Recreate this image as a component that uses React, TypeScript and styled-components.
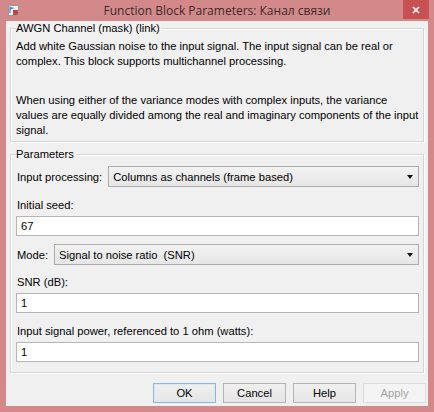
import React from 'react'
import styled, { createGlobalStyle } from 'styled-components'

const GlobalStyle = createGlobalStyle`
  html, body {
    margin: 0;
    padding: 0;
    background: #d3898a;
  }
  body {
    font-family: "Liberation Sans", Arial, sans-serif;
    font-size: 11.2px;
    color: #000;
  }
`

const Window = styled.div`
  width: 434px;
  height: 412px;
  background: #d3898a;
  display: flex;
  flex-direction: column;
`

const TitleBar = styled.div`
  position: relative;
  height: 21px;
  flex: none;
  display: flex;
  align-items: center;
  justify-content: center;
`

const Title = styled.span`
  font-family: "Open Sans", "Liberation Sans", sans-serif;
  font-size: 12px;
  color: #3b2a2a;
`

const AppIcon = styled.svg`
  position: absolute;
  left: 8px;
  top: 5px;
`

const CloseButton = styled.div`
  position: absolute;
  right: 5px;
  top: 0;
  width: 26px;
  height: 19px;
  background: #c75050;
  display: flex;
  align-items: center;
  justify-content: center;
`

const Client = styled.div`
  flex: 1;
  margin: 0 6px 6px 6px;
  padding: 0 2px 0 4px;
  background: #f0f0f0;
  display: flex;
  flex-direction: column;
`

const Group = styled.fieldset<{ $top: number; $bottom: number }>`
  margin: ${p => p.$top}px 2px 0 0;
  padding: 0 4px ${p => p.$bottom}px 5px;
  min-width: 0;
  border: 1px solid #d5d5d5;
  border-radius: 0;
  box-shadow: inset 1px 1px 0 #fff, 1px 1px 0 #fff;
`

const Legend = styled.legend`
  padding: 0 2px 0 0;
  line-height: 15px;
`

const Para = styled.p<{ $gap: number }>`
  margin: ${p => p.$gap}px 0 0 0;
  line-height: 15px;
  white-space: nowrap;
`

const Row = styled.div<{ $top: number }>`
  display: flex;
  align-items: center;
  margin-top: ${p => p.$top}px;
`

const RowLabel = styled.span`
  flex: none;
  margin-right: 6px;
  padding-left: 1px;
`

const Select = styled.div`
  flex: 1;
  height: 21px;
  box-sizing: border-box;
  border: 1px solid #acacac;
  background: linear-gradient(#f2f2f2, #e6e6e6);
  display: flex;
  align-items: center;
  padding: 0 5px 0 4px;
`

const SelectText = styled.span`
  flex: 1;
`

const Arrow = styled.span`
  width: 0;
  height: 0;
  border-left: 3.5px solid transparent;
  border-right: 3.5px solid transparent;
  border-top: 4px solid #111;
`

const FieldLabel = styled.div<{ $top: number }>`
  margin: ${p => p.$top}px 0 3px 1px;
  line-height: 16px;
`

const TextBox = styled.div`
  height: 20px;
  box-sizing: border-box;
  border: 1px solid #b5b5b5;
  background: #fff;
  padding: 0 4px;
  display: flex;
  align-items: center;
`

const ButtonBar = styled.div`
  display: flex;
  justify-content: flex-end;
  gap: 7px;
  margin-top: 10px;
`

const Button = styled.div<{ $default?: boolean; $disabled?: boolean }>`
  width: 63px;
  height: 20px;
  box-sizing: border-box;
  display: flex;
  align-items: center;
  justify-content: center;
  border: 1px solid ${p => (p.$default ? '#8cb6e0' : p.$disabled ? '#dcdcdc' : '#b4b4b4')};
  background: ${p => (p.$disabled ? '#f4f4f4' : 'linear-gradient(#f0f0f0, #e5e5e5)')};
  color: ${p => (p.$disabled ? '#a3a3a3' : '#000')};
  box-shadow: ${p => (p.$default ? 'inset 0 0 0 1px #dbe9f7' : 'none')};
`

export default function App() {
  return (
    <Window>
      <GlobalStyle />
      <TitleBar>
        <AppIcon width="11" height="11" viewBox="0 0 11 11">
          <rect x="0.5" y="0.5" width="10" height="10" fill="#f4f4f4" stroke="#9a9a9a" />
          <path d="M2 1.5 V8" stroke="#2a5fa8" strokeWidth="1" />
          <path d="M2.5 2 L6.5 3 L2.5 4.5 Z" fill="#3b78c8" />
          <rect x="5.5" y="5.5" width="4" height="4" fill="#d23a3a" stroke="#8a1f1f" strokeWidth="0.6" />
        </AppIcon>
        <Title>Function Block Parameters: Канал связи</Title>
        <CloseButton>
          <svg width="8" height="8" viewBox="0 0 8 8">
            <path d="M1 1 L7 7 M7 1 L1 7" stroke="#fff" strokeWidth="1.6" />
          </svg>
        </CloseButton>
      </TitleBar>
      <Client>
        <Group $top={0} $bottom={3}>
          <Legend>AWGN Channel (mask) (link)</Legend>
          <Para $gap={3}>
            Add white Gaussian noise to the input signal. The input signal can be real or
            <br />
            complex. This block supports multichannel processing.
          </Para>
          <Para $gap={24}>
            When using either of the variance modes with complex inputs, the variance
            <br />
            values are equally divided among the real and imaginary components of the input
            <br />
            signal.
          </Para>
        </Group>
        <Group $top={5} $bottom={10}>
          <Legend>Parameters</Legend>
          <Row $top={4}>
            <RowLabel>Input processing:</RowLabel>
            <Select>
              <SelectText>Columns as channels (frame based)</SelectText>
              <Arrow />
            </Select>
          </Row>
          <FieldLabel $top={10}>Initial seed:</FieldLabel>
          <TextBox>67</TextBox>
          <Row $top={8}>
            <RowLabel>Mode:</RowLabel>
            <Select>
              <SelectText>Signal to noise ratio&nbsp; (SNR)</SelectText>
              <Arrow />
            </Select>
          </Row>
          <FieldLabel $top={9}>SNR (dB):</FieldLabel>
          <TextBox>1</TextBox>
          <FieldLabel $top={10}>Input signal power, referenced to 1 ohm (watts):</FieldLabel>
          <TextBox>1</TextBox>
        </Group>
        <ButtonBar>
          <Button $default>OK</Button>
          <Button>Cancel</Button>
          <Button>Help</Button>
          <Button $disabled>Apply</Button>
        </ButtonBar>
      </Client>
    </Window>
  )
}
